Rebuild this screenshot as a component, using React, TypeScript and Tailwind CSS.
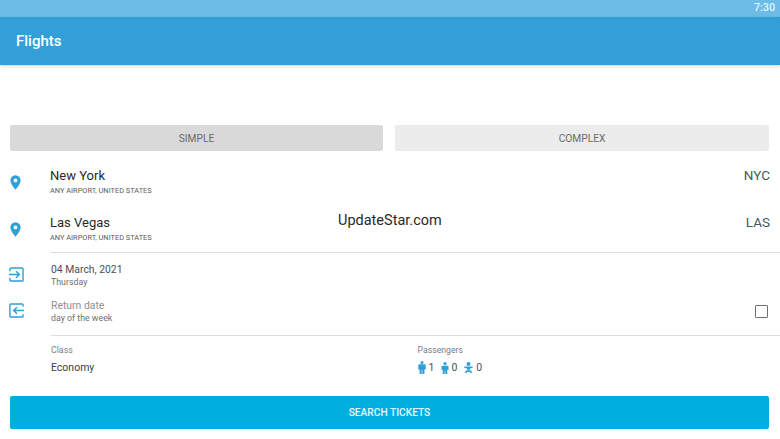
import React from "react";

const Pin = () => (
  <svg width="11" height="15" viewBox="0 0 12 16" className="shrink-0">
    <path fillRule="evenodd" fill="#2f9fd8" d="M6 0a5.6 5.6 0 0 0-5.6 5.6C.4 9.6 6 16 6 16s5.6-6.4 5.6-10.4A5.6 5.6 0 0 0 6 0Zm0 3.600a2.100 2.100 0 1 1 0 4.200 2.100 2.100 0 0 1 0-4.200Z" />
  </svg>
);

const Enter = () => (
  <svg width="15" height="15" viewBox="0 0 16 16" fill="none" stroke="#2f9fd8" strokeWidth="1.500">
    <path d="M1 4.500V2a1 1 0 0 1 1-1h12a1 1 0 0 1 1 1v12a1 1 0 0 1-1 1H2a1 1 0 0 1-1-1v-2.500" />
    <path d="M0 8h10.500M7.500 4.500 11 8l-3.500 3.500" />
  </svg>
);

const Leave = () => (
  <svg width="15" height="15" viewBox="0 0 16 16" fill="none" stroke="#2f9fd8" strokeWidth="1.500">
    <path d="M1 14V2a1 1 0 0 1 1-1h12a1 1 0 0 1 1 1v2M15 12v2a1 1 0 0 1-1 1H2a1 1 0 0 1-1-1" />
    <path d="M16 8H5M8.500 4.500 5 8l3.500 3.500" />
  </svg>
);

const Adult = () => (
  <svg width="8" height="13" viewBox="0 0 8 13" fill="#2f9fd8" className="shrink-0">
    <circle cx="4" cy="1.500" r="1.500" />
    <path d="M1.300 3.300h5.400a1 1 0 0 1 1 1V8.500H6.400V13H4.300V9h-.6v4H1.600V8.500H.3V4.300a1 1 0 0 1 1-1Z" />
  </svg>
);

const Child = () => (
  <svg width="8" height="12" viewBox="0 0 8 12" fill="#2f9fd8" className="shrink-0">
    <circle cx="4" cy="1.600" r="1.600" />
    <path d="M1.500 3.700h5a1 1 0 0 1 1 1v3.100H6.300V12H4.300V9h-.6v3H1.700V7.800H.5V4.700a1 1 0 0 1 1-1Z" />
  </svg>
);

const Infant = () => (
  <svg width="9" height="12" viewBox="0 0 9 12" fill="#2f9fd8" className="shrink-0">
    <circle cx="4.500" cy="2" r="2" />
    <path d="M.3 4.600h8.400v1.200L6 6.500v1.300H3V6.500L.3 5.800Z" />
    <path d="M2.400 8.300h4.200l1.600 1.900-1.100 1.100L5.700 10H3.300l-1.400 1.300-1.100-1.100Z" />
  </svg>
);

const Route = ({ city, code }: { city: string; code: string }) => (
  <div className="flex h-[47px] items-center">
    <div className="flex w-[50px] pl-[10px] pt-[1px]"><Pin /></div>
    <div className="flex-1">
      <div className="text-[13px] leading-[18px] text-[#2a2a2a]">{city}</div>
      <div className="text-[7.400px] leading-[11px] text-[#5c5c5c]">ANY AIRPORT, UNITED STATES</div>
    </div>
    <div className="-mt-[13px] pr-[10px] text-[13.500px] text-[#455a5c]">{code}</div>
  </div>
);

export default function App() {
  return (
    <div className="relative flex h-[439px] w-[780px] flex-col overflow-hidden bg-white font-['Roboto',sans-serif]">
      <div className="flex h-[17px] shrink-0 items-center justify-end bg-[#6cbce5] pr-[5px] text-[10.700px] font-medium text-[#e3f3fb]">7:30</div>
      <div className="flex h-[48px] shrink-0 items-center bg-[#329fd9] pl-[16px] text-[15px] font-medium text-white shadow-[0_1px_3px_rgba(0,0,0,0.2)]">Flights</div>

      <div className="mt-[60px] flex shrink-0 gap-[12px] pl-[10px]">
        <div className="flex h-[26px] w-[373px] items-center justify-center rounded-[2px] bg-[#d9d9d9] pt-[2px] text-[10.200px] text-[#6a6a6a]">SIMPLE</div>
        <div className="flex h-[26px] w-[374px] items-center justify-center rounded-[2px] bg-[#ececec] pt-[2px] text-[10.200px] text-[#6a6a6a]">COMPLEX</div>
      </div>

      <div className="mt-[7px] shrink-0">
        <Route city="New York" code="NYC" />
        <Route city="Las Vegas" code="LAS" />
      </div>

      <div className="ml-[51px] h-px shrink-0 bg-[#dedede]" />

      <div className="mt-[8px] flex h-[28px] shrink-0 items-center">
        <div className="flex w-[51px] pb-[2px] pl-[9px]"><Enter /></div>
        <div className="flex-1">
          <div className="mt-[1px] text-[10.400px] leading-[14px] text-[#505050]">04 March, 2021</div>
          <div className="text-[8.800px] leading-[11px] text-[#707070]">Thursday</div>
        </div>
      </div>

      <div className="mt-[8px] flex h-[28px] shrink-0 items-center">
        <div className="flex w-[51px] pb-[2px] pl-[9px]"><Leave /></div>
        <div className="flex-1">
          <div className="mt-[1px] text-[10.400px] leading-[14px] text-[#909090]">Return date</div>
          <div className="text-[8.800px] leading-[11px] text-[#707070]">day of the week</div>
        </div>
        <div className="mr-[12px] h-[13px] w-[13px] rounded-[1px] border-[1.500px] border-[#707070]" />
      </div>

      <div className="ml-[51px] mt-[10px] h-px shrink-0 bg-[#dedede]" />

      <div className="mt-[8px] flex shrink-0 pl-[51px]">
        <div className="w-[366.500px]">
          <div className="text-[8.800px] leading-[12px] text-[#808080]">Class</div>
          <div className="mt-[4px] text-[10.500px] leading-[15px] text-[#404040]">Economy</div>
        </div>
        <div>
          <div className="text-[8.700px] leading-[12px] text-[#808080]">Passengers</div>
          <div className="mt-[4px] flex h-[15px] items-center text-[10.500px] text-[#505050]">
            <Adult /><span className="ml-[3px] mr-[7px]">1</span>
            <Child /><span className="ml-[2px] mr-[7px]">0</span>
            <Infant /><span className="ml-[3px]">0</span>
          </div>
        </div>
      </div>

      <div className="ml-[10px] mt-[21px] flex h-[33px] w-[759px] shrink-0 items-center justify-center rounded-[2px] bg-[#00afdf] text-[10.200px] font-medium text-[#e8f8fc]">SEARCH TICKETS</div>

      <div className="absolute left-[338px] top-[212px] text-[14.500px] leading-[17px] text-[#2a2a2a]">UpdateStar.com</div>
    </div>
  );
}
